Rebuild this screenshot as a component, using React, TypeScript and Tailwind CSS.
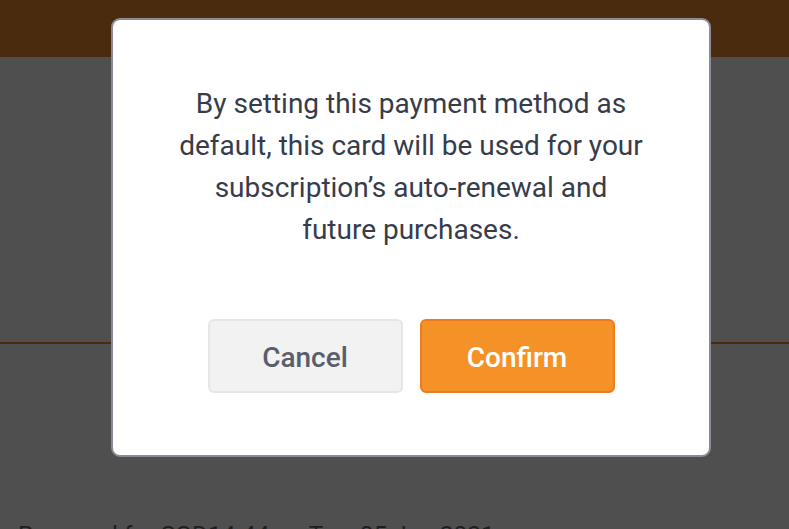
export default function App() {
  return (
    <div className="relative h-[529px] w-[789px] overflow-hidden bg-[#4f4f4f] font-['Roboto',sans-serif]">
      {/* page behind the overlay */}
      <div className="h-[57px] bg-[#4a2b0e]" />
      <div className="mt-[285px] h-[2px] bg-[#4a2b0e]" />
      <p className="mt-[177px] pl-[18px] text-[24.5px] leading-[28px] whitespace-nowrap text-[#1f1f1f]">
        Renewed for SGD14.44 on Tue, 05 Jan 2021
      </p>

      {/* dialog */}
      <div className="absolute left-[111px] top-[18px] flex h-[439px] w-[600px] flex-col items-center rounded-[9px] border-2 border-[#8a8b94] bg-white">
        <p className="mt-[63px] text-center text-[28px] leading-[42px] text-[#373c4b]">
          By setting this payment method as
          <br />
          default, this card will be used for your
          <br />
          subscription’s auto-renewal and
          <br />
          future purchases.
        </p>
        <div className="mt-[68px] flex gap-[17px]">
          <button className="h-[74px] w-[195px] rounded-[6px] border-2 border-[#e6e6e6] bg-[#f2f2f2] pt-[3px] text-[28px] font-medium text-[#5a5e6c]">
            Cancel
          </button>
          <button className="h-[74px] w-[195px] rounded-[6px] border-2 border-[#f07a22] bg-[#f59227] pt-[3px] text-[28px] font-medium text-white">
            Confirm
          </button>
        </div>
      </div>
    </div>
  );
}
